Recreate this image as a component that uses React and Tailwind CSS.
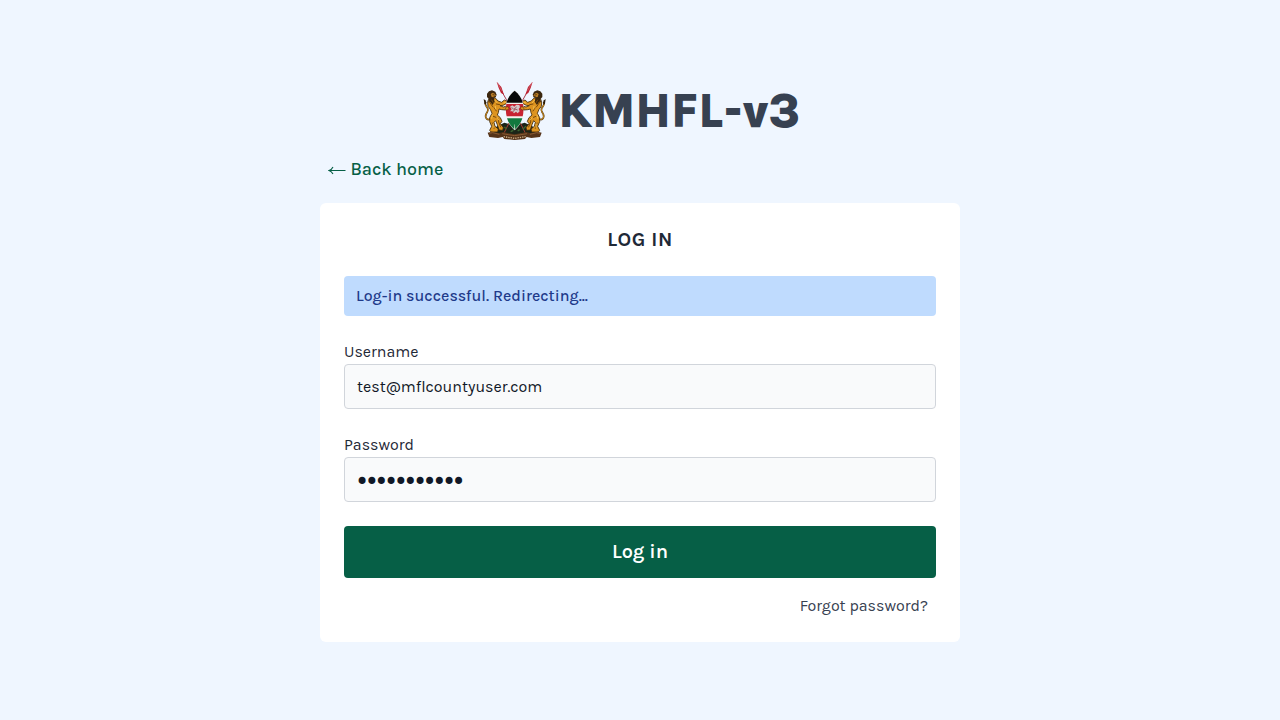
import React from "react";

function Lion() {
  return (
    <g strokeLinejoin="round" strokeLinecap="round">
      <path d="M44 134 C34 143 25 133 29 122 C32 114 38 112 34 104 C31 98 26 97 27 88" fill="none" stroke="#5a380c" strokeWidth="5" />
      <path d="M44 134 C34 143 25 133 29 122 C32 114 38 112 34 104 C31 98 26 97 27 88" fill="none" stroke="#dc9a22" strokeWidth="2.5" />
      <path d="M22 76 L27 80 L30 86 L28 94 L24 89 Z" fill="#2c1c08" />
      <path d="M38 76 L48 71 L58 74 L65 82 L76 86 L84 79 L92 83 L90 90 L80 95 L71 96 L81 100 L92 97 L95 103 L88 109 L76 108 L68 106 L66 117 L63 124 L72 132 L77 143 L72 150 L81 162 L79 170 L68 169 L63 153 L58 141 L53 146 L56 158 L66 166 L64 175 L44 175 L40 170 L46 158 L40 144 L40 132 L47 119 L42 107 L35 98 L34 86 Z" fill="#dd9420" stroke="#3f290a" strokeWidth="2.5" />
      <path d="M32 60 L38 53 L47 50 L57 54 L61 63 L58 71 L53 73 L55 85 L48 94 L43 86 L36 86 L38 77 L32 70 Z" fill="#3b270f" />
      <path d="M43 61 L49 57 L55 60 L59 66 L53 71 L46 70 Z" fill="#b97c24" />
      <path d="M50 63 L54 64 M53 69 L57 69" stroke="#2a1907" strokeWidth="2" />
      <path d="M39 82 L44 92 L50 100 M46 79 L51 87 M60 91 L70 93 M54 103 L60 112 M51 128 L59 131 M67 135 L67 145 L73 160 M48 148 L53 164" fill="none" stroke="#7b4a0c" strokeWidth="3" />
      <path d="M56 80 L62 87 M57 98 L58 106 M48 124 L46 134 M63 132 L68 139 M50 151 L51 161 M82 88 L88 86" fill="none" stroke="#f5bd4a" strokeWidth="3" />
    </g>
  );
}

function CoatOfArms() {
  return (
    <svg viewBox="20 22 192 180" className="h-[60px] w-16 shrink-0" role="img" aria-label="Coat of arms of Kenya">
      <path d="M70 42 L98 92 M160 42 L132 92" stroke="#a83a48" strokeWidth="3" />
      <path d="M61 24 L75 40 L83 63 L74 58 L67 43 Z M169 24 L155 40 L147 63 L156 58 L163 43 Z" fill="#bd2433" />
      <path d="M63 26 L76 51 M167 26 L154 51" stroke="#dd8690" strokeWidth="1.5" />
      <path d="M45 172 L62 158 L84 147 L114 156 L145 147 L168 158 L185 172 L177 180 L145 178 L114 184 L83 178 L52 180 Z" fill="#1b2518" />
      <path d="M83 178 L98 148 M147 178 L132 148" stroke="#a63a32" strokeWidth="3" />
      <path d="M84 160 L91 166 M139 167 L149 158 M103 174 L111 170 M124 172 L130 168" stroke="#3d6632" strokeWidth="4" />
      <Lion />
      <g transform="translate(230 0) scale(-1 1)"><Lion /></g>
      <path d="M115 50 C98 62 88 80 88 108 C88 134 98 154 115 170 C132 154 142 134 142 108 C142 80 132 62 115 50 Z" fill="#f4f2ee" />
      <path d="M115 51 C103 61 94 72 91 87 L139 87 C136 72 127 61 115 51 Z" fill="#080808" />
      <path d="M90 91 L140 91 C142 104 142 117 139 128 L91 128 C88 117 88 104 90 91 Z" fill="#c82332" />
      <path d="M92 134 L138 134 C134 148 126 158 115 168 C104 158 96 148 92 134 Z" fill="#12783e" />
      <path d="M114.5 152 L115.5 152 L116.5 168 L113.5 168 Z" fill="#ece7df" />
      <path d="M101 99 L108 95 L114 99 L120 93 L129 94 L131 101 L127 106 L130 113 L124 119 L119 114 L113 119 L108 113 L101 113 L106 107 Z" fill="#d3c6c8" />
      <path d="M106 101 L112 107 L121 100 M111 114 L116 106 L124 109" fill="none" stroke="#92424d" strokeWidth="2.5" />
      <path d="M88 101 L95 99 L98 104 L93 109 L87 108 Z M142 101 L135 99 L132 104 L137 109 L143 108 Z" fill="#d88e20" stroke="#4a2e0b" strokeWidth="1.5" />
      <path d="M34 177 L46 174 L68 178 L81 175 L98 179 L115 182 L132 179 L149 175 L162 178 L184 174 L196 177 L191 190 L165 193 L151 190 L146 196 L115 199 L84 196 L79 190 L65 193 L39 190 Z" fill="#553319" />
      <path d="M39 179 L49 177 L69 182 M191 179 L181 177 L161 182 M78 180 L96 183 L115 186 L134 183 L152 180" fill="none" stroke="#946438" strokeWidth="2.5" />
      <path d="M82 189 L115 194 L148 189" fill="none" stroke="#ceb08a" strokeWidth="4" strokeDasharray="4 3" />
    </svg>
  );
}

function Field({ label, type, value, inputClass }) {
  return (
    <label className="flex flex-col text-base text-[#1f2937]">
      <span className="flex h-6 items-center">{label}</span>
      <input
        type={type}
        defaultValue={value}
        className={"h-[45px] w-full rounded border border-[#d1d5db] bg-[#f9fafb] text-[#111827] outline-none " + inputClass}
      />
    </label>
  );
}

export default function App() {
  return (
    <div className="flex h-screen w-full flex-col items-center bg-[#eff6ff] pt-[81px] font-['Karla','Inter',sans-serif]">
      <main className="flex w-[640px] flex-col">
        <h1 className="flex h-[60px] items-center justify-center gap-[11px] pl-[3px] text-5xl font-extrabold text-[#374151]">
          <CoatOfArms />
          <span className="whitespace-nowrap">KMHFL-v3</span>
        </h1>
        <a href="#" className="mt-[14px] flex h-7 items-center gap-[4.4px] px-2 text-lg font-medium text-[#065f46]">
          <svg viewBox="0 0 18 10" className="mt-[3px] h-[10px] w-[18px]" fill="none" stroke="currentColor" strokeWidth="1.1" aria-hidden="true">
            <path d="M17.5 4.5 H1.2 M5 1 Q3.7 3.7 1 4.5 Q3.7 5.3 5 8" />
          </svg>
          <span>Back home</span>
        </a>
        <form className="mt-5 flex h-[439px] flex-col rounded-md bg-white px-6 pt-6" onSubmit={(e) => e.preventDefault()}>
          <h2 className="flex h-[25px] items-center justify-center text-xl font-bold tracking-wide text-[#1f2937]">LOG IN</h2>
          <p className="mt-6 flex h-10 items-center rounded bg-[#bfdbfe] px-3 text-base font-medium text-[#1e3a8a]">Log-in successful. Redirecting...</p>
          <div className="mt-6 flex flex-col gap-6">
            <Field label="Username" type="text" value="test@mflcountyuser.com" inputClass="px-3" />
            <Field label="Password" type="password" value="password123" inputClass="pt-1 pr-3 pl-[10px] font-['DejaVu_Sans',sans-serif] text-[24px] tracking-[-4.5px]" />
          </div>
          <button className="mt-6 h-[52px] w-full rounded bg-[#065f46] text-xl font-semibold text-white">Log in</button>
          <a href="#" className="mt-4 mr-2 flex h-6 items-center self-end text-base text-[#374151]">Forgot password?</a>
        </form>
      </main>
    </div>
  );
}
